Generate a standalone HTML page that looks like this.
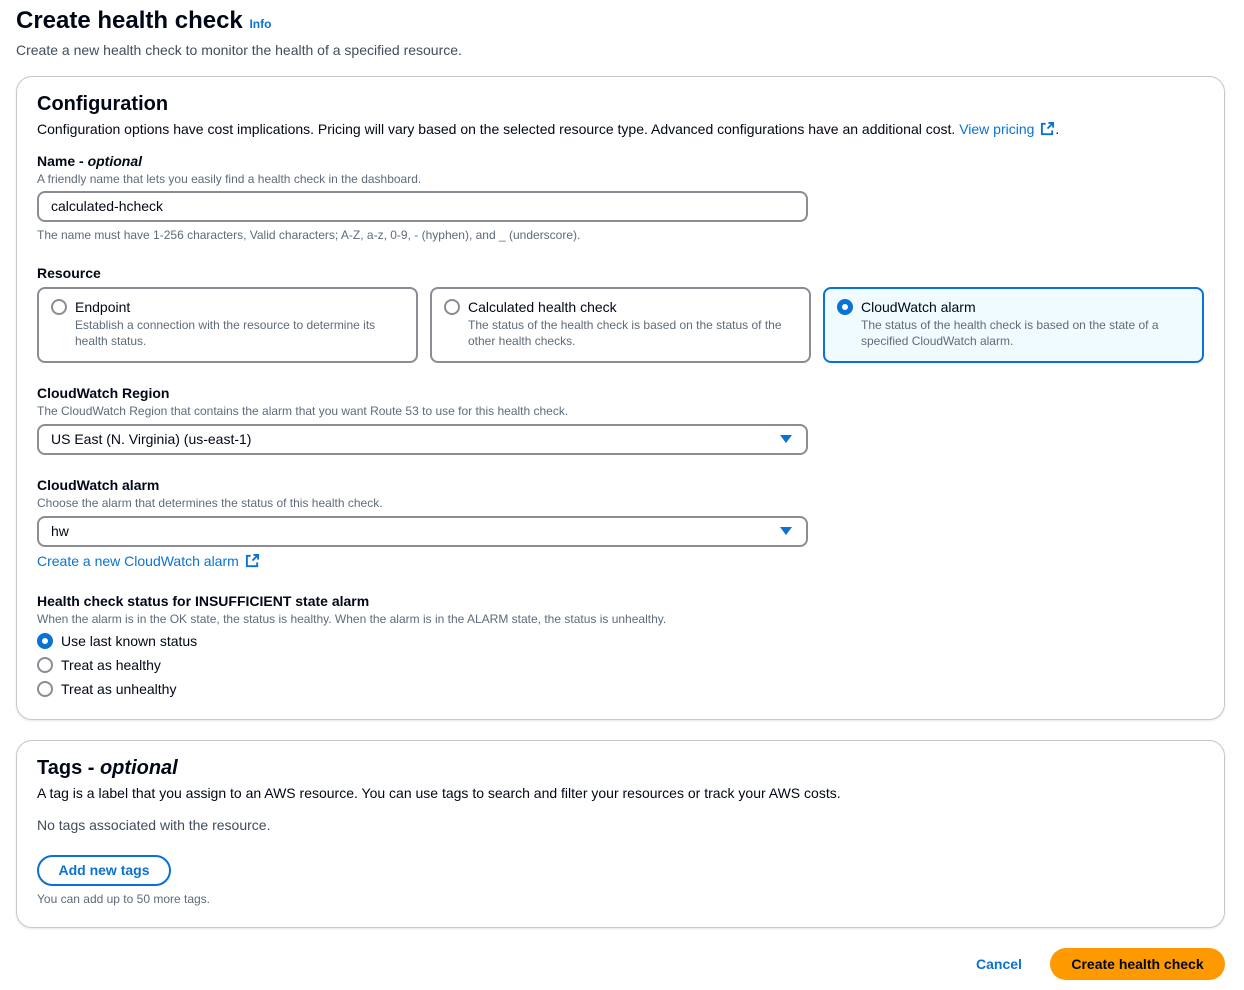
<!DOCTYPE html>
<html><head><style>
*{box-sizing:border-box;margin:0;padding:0}
body{width:1244px;height:990px;background:#fff;font-family:"Liberation Sans",sans-serif;color:#000716;position:relative;overflow:hidden}
.a{position:absolute;white-space:nowrap}
.t14{font-size:14px;line-height:18px}
.t12{font-size:12px;line-height:16px;color:#5f6b7a}
.b{font-weight:bold}
.link{color:#0972d3}
.box{position:absolute;border:1px solid #c6c6cd;border-radius:16px;box-shadow:0 1px 2px rgba(0,7,22,.1)}
.inp{position:absolute;left:37px;width:771px;height:31px;border:2px solid #8c8c94;border-radius:8px;padding-left:12px;font-size:14px;line-height:27px}
.card{position:absolute;top:287px;width:381px;height:76px;border:2px solid #8c8c94;border-radius:8px}
.card.sel{border-color:#0972d3;background:#f0fbff}
.rad{position:absolute;width:16px;height:16px;border-radius:50%;border:2px solid #8c8c94;background:#fff}
.rad.on{border:5px solid #0972d3}
.tri{position:absolute;left:780px;width:0;height:0;border-left:6px solid transparent;border-right:6px solid transparent;border-top:8px solid #0972d3}
</style></head><body>
<div class="a b" style="left:16px;top:6px;font-size:24px;line-height:30px">Create health check <span class="link" style="font-size:12px">Info</span></div>
<div class="a t14" style="left:16px;top:41px;color:#414d5c">Create a new health check to monitor the health of a specified resource.</div>

<div class="box" style="left:16px;top:76px;width:1209px;height:644px"></div>
<div class="a b" style="left:37px;top:92px;font-size:20px;line-height:24px">Configuration</div>
<div class="a t14" style="left:37px;top:120px">Configuration options have cost implications. Pricing will vary based on the selected resource type. Advanced configurations have an additional cost. <span class="link">View pricing</span>
<svg width="15" height="15" viewBox="0 0 16 16" style="vertical-align:-2px;margin-left:2px"><path d="M9 2h5v5M14 2L8 8M6 3H2v11h11v-4" fill="none" stroke="#0972d3" stroke-width="2"/></svg>.</div>

<div class="a t14 b" style="left:37px;top:152px">Name - <i>optional</i></div>
<div class="a t12" style="left:37px;top:171px">A friendly name that lets you easily find a health check in the dashboard.</div>
<div class="inp" style="top:191px">calculated-hcheck</div>
<div class="a t12" style="left:37px;top:227px">The name must have 1-256 characters, Valid characters; A-Z, a-z, 0-9, - (hyphen), and _ (underscore).</div>

<div class="a t14 b" style="left:37px;top:264px">Resource</div>
<div class="card" style="left:37px"></div>
<div class="rad" style="left:51px;top:299px"></div>
<div class="a t14" style="left:75px;top:298px">Endpoint</div>
<div class="a t12" style="left:75px;top:317px;white-space:normal;width:330px">Establish a connection with the resource to determine its health status.</div>
<div class="card" style="left:430px"></div>
<div class="rad" style="left:444px;top:299px"></div>
<div class="a t14" style="left:468px;top:298px">Calculated health check</div>
<div class="a t12" style="left:468px;top:317px;white-space:normal;width:330px">The status of the health check is based on the status of the other health checks.</div>
<div class="card sel" style="left:823px"></div>
<div class="rad on" style="left:837px;top:299px"></div>
<div class="a t14" style="left:861px;top:298px">CloudWatch alarm</div>
<div class="a t12" style="left:861px;top:317px;white-space:normal;width:330px">The status of the health check is based on the state of a specified CloudWatch alarm.</div>

<div class="a t14 b" style="left:37px;top:384px">CloudWatch Region</div>
<div class="a t12" style="left:37px;top:403px">The CloudWatch Region that contains the alarm that you want Route 53 to use for this health check.</div>
<div class="inp" style="top:424px">US East (N. Virginia) (us-east-1)</div>
<div class="tri" style="top:435px"></div>

<div class="a t14 b" style="left:37px;top:476px">CloudWatch alarm</div>
<div class="a t12" style="left:37px;top:495px">Choose the alarm that determines the status of this health check.</div>
<div class="inp" style="top:516px">hw</div>
<div class="tri" style="top:527px"></div>
<div class="a t14 link" style="left:37px;top:552px">Create a new CloudWatch alarm
<svg width="15" height="15" viewBox="0 0 16 16" style="vertical-align:-2px;margin-left:2px"><path d="M9 2h5v5M14 2L8 8M6 3H2v11h11v-4" fill="none" stroke="#0972d3" stroke-width="2"/></svg></div>

<div class="a t14 b" style="left:37px;top:592px">Health check status for INSUFFICIENT state alarm</div>
<div class="a t12" style="left:37px;top:611px">When the alarm is in the OK state, the status is healthy. When the alarm is in the ALARM state, the status is unhealthy.</div>
<div class="rad on" style="left:37px;top:633px"></div>
<div class="a t14" style="left:61px;top:632px">Use last known status</div>
<div class="rad" style="left:37px;top:657px"></div>
<div class="a t14" style="left:61px;top:656px">Treat as healthy</div>
<div class="rad" style="left:37px;top:681px"></div>
<div class="a t14" style="left:61px;top:680px">Treat as unhealthy</div>

<div class="box" style="left:16px;top:740px;width:1209px;height:188px"></div>
<div class="a b" style="left:37px;top:756px;font-size:20px;line-height:24px">Tags - <i>optional</i></div>
<div class="a t14" style="left:37px;top:784px">A tag is a label that you assign to an AWS resource. You can use tags to search and filter your resources or track your AWS costs.</div>
<div class="a t14" style="left:37px;top:816px;color:#414d5c">No tags associated with the resource.</div>
<div class="a b link" style="left:37px;top:855px;width:134px;height:31px;border:2px solid #0972d3;border-radius:16px;text-align:center;font-size:14px;line-height:27px">Add new tags</div>
<div class="a t12" style="left:37px;top:891px">You can add up to 50 more tags.</div>

<div class="a b link" style="left:976px;top:955px;font-size:14px;line-height:18px">Cancel</div>
<div class="a b" style="left:1050px;top:948px;width:175px;height:32px;background:#ff9900;border-radius:16px;text-align:center;font-size:14px;line-height:32px">Create health check</div>
</body></html>
